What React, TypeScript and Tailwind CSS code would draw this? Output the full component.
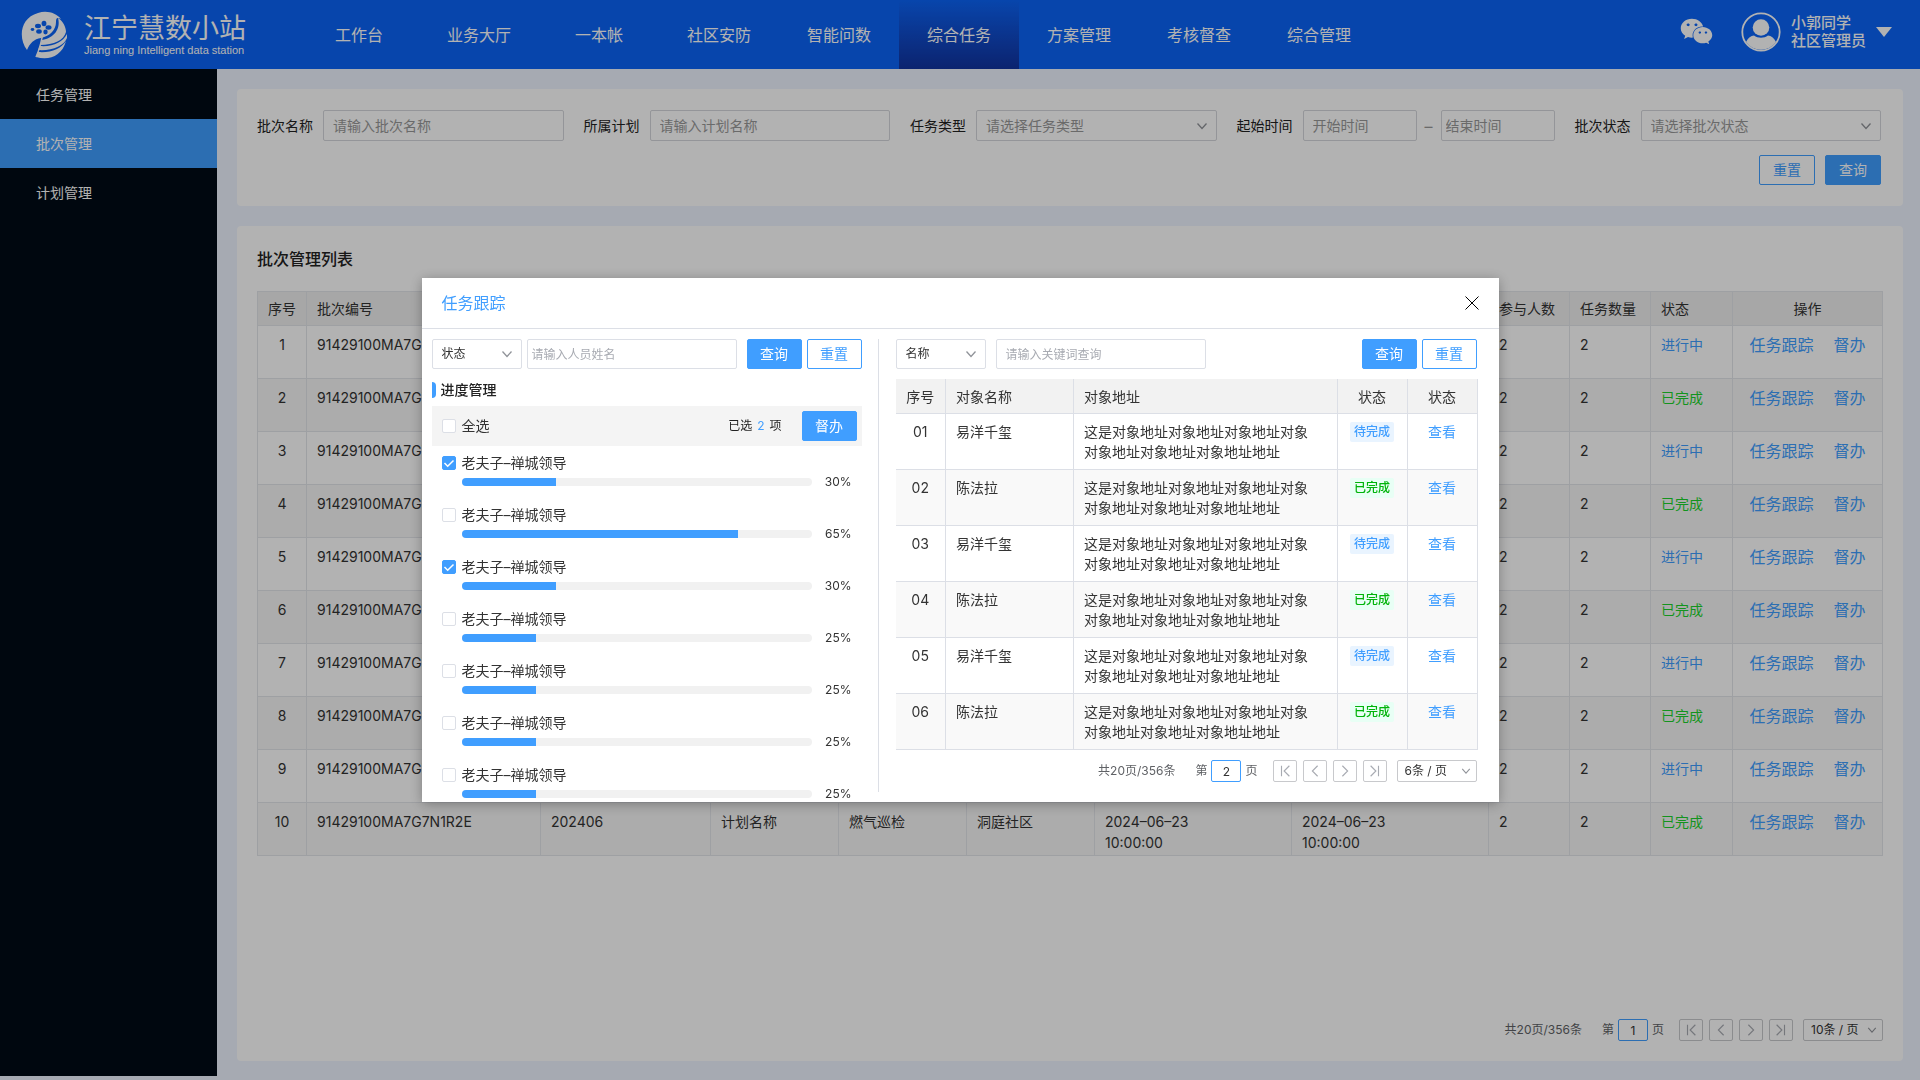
import React, { useState } from 'react';
import clsx from 'clsx';
import { FaWeixin } from 'react-icons/fa';

const navItems = ['工作台', '业务大厅', '一本帐', '社区安防', '智能问数', '综合任务', '方案管理', '考核督查', '综合管理'];
const sideItems = ['任务管理', '批次管理', '计划管理'];

const batches = Array.from({ length: 10 }, (_, i) => ({
  id: i + 1,
  code: '91429100MA7G7N1R2E',
  month: '202406',
  plan: '计划名称',
  type: '燃气巡检',
  community: '洞庭社区',
  start: ['2024–06–23', '10:00:00'],
  end: ['2024–06–23', '10:00:00'],
  people: 2,
  tasks: 2,
  done: i % 2 === 1,
}));

const batchColumns = [
  { label: '序号', className: 'w-[49px] text-center' },
  { label: '批次编号', className: 'w-[234px] px-[10px] text-left' },
  { label: '所属月份', className: 'w-[170px] px-[10px] text-left' },
  { label: '所属计划', className: 'w-[128px] px-[10px] text-left' },
  { label: '任务类型', className: 'w-[128px] px-[10px] text-left' },
  { label: '所属社区', className: 'w-[128px] px-[10px] text-left' },
  { label: '开始时间', className: 'w-[197px] px-[10px] text-left' },
  { label: '结束时间', className: 'w-[197px] px-[10px] text-left' },
  { label: '参与人数', className: 'w-[81px] px-[10px] text-left' },
  { label: '任务数量', className: 'w-[81px] px-[10px] text-left' },
  { label: '状态', className: 'w-[82px] px-[10px] text-left' },
  { label: '操作', className: 'w-[150px] text-center' },
];

// fill is the drawn length of the bar, percent is the printed value
const people = [
  { id: 1, name: '老夫子–禅城领导', percent: 30, fill: 27 },
  { id: 2, name: '老夫子–禅城领导', percent: 65, fill: 79 },
  { id: 3, name: '老夫子–禅城领导', percent: 30, fill: 27 },
  { id: 4, name: '老夫子–禅城领导', percent: 25, fill: 21.4 },
  { id: 5, name: '老夫子–禅城领导', percent: 25, fill: 21.4 },
  { id: 6, name: '老夫子–禅城领导', percent: 25, fill: 21.4 },
  { id: 7, name: '老夫子–禅城领导', percent: 25, fill: 21.4 },
];

const targets = ['01', '02', '03', '04', '05', '06'].map((no, i) => ({
  no,
  name: i % 2 === 0 ? '易洋千玺' : '陈法拉',
  address: ['这是对象地址对象地址对象地址对象', '对象地址对象地址对象地址地址'],
  done: i % 2 === 1,
}));

function Logo() {
  return (
    <svg viewBox="0 0 48 48" className="size-12 shrink-0" aria-hidden="true">
      <path d="M7 39C-2 27 0 7 18 2c9-3 18 0 23 6-4-2-5-1-5 3 0 8-6 14-15 16-7 1-11 5-14 12Z" fill="#fff" />
      <path d="M38 7c3 11-4 20-16 22l-2 5c14 0 24-5 26-13 0-5-3-11-8-14Z" fill="#fff" />
      <path d="M47 23c-4 8-14 13-27 12l-2 4c14 1 26-4 29-12Z" fill="#fff" />
      <path d="M46 30c-5 8-15 12-28 11l-2 5c13 4 26-1 30-16Z" fill="#fff" />
      <path d="M23 20c-1 9-3 17-7 26" fill="none" stroke="#fff" strokeWidth="1.500" />
      <g fill="#0b64f7">
        <ellipse cx="18" cy="15" rx="3" ry="2.200" />
        <ellipse cx="24" cy="12.500" rx="2.400" ry="2.800" />
        <ellipse cx="28.500" cy="16.500" rx="3" ry="2.200" />
        <ellipse cx="25.500" cy="21" rx="2.200" ry="2.400" />
        <ellipse cx="19" cy="20.500" rx="2.800" ry="2.200" />
        <ellipse cx="12.500" cy="18.500" rx="1.800" ry="1.400" />
      </g>
    </svg>
  );
}

function Avatar() {
  return (
    <svg viewBox="0 0 40 40" className="size-10" aria-hidden="true">
      <circle cx="20" cy="20" r="18.7" fill="none" stroke="#fff" strokeWidth="1.8" />
      <circle cx="20" cy="15.5" r="8.3" fill="#fff" />
      <path d="M5 30c2-4 5-6.300 8-6.500 4 3 10 3 14 0 3 .2 6 2.500 8 6.500a18.500 18.500 0 0 1-30 0Z" fill="#fff" />
    </svg>
  );
}

function Chevron({ className }: { className?: string }) {
  return (
    <svg
      viewBox="0 0 12 12"
      fill="none"
      stroke="currentColor"
      strokeWidth="1.3"
      className={clsx('pointer-events-none absolute top-1/2 -translate-y-1/2', className)}
      aria-hidden="true"
    >
      <path d="M1.500 3.500 6 8.500l4.500-5" />
    </svg>
  );
}

function SelectBox({ label, option, className, selectClass, chevronClass }: {
  label: string;
  option: string;
  className?: string;
  selectClass: string;
  chevronClass: string;
}) {
  return (
    <div className={clsx('relative', className)}>
      <select aria-label={label} className={clsx('w-full appearance-none rounded-xs border bg-white', selectClass)}>
        <option>{option}</option>
      </select>
      <Chevron className={chevronClass} />
    </div>
  );
}

function Field({ id, label, children }: { id?: string; label: string; children: React.ReactNode }) {
  return (
    <div className="flex min-w-0 flex-1 items-center gap-[10px]">
      <label htmlFor={id} className="shrink-0 text-sm text-[#222]">{label}</label>
      {children}
    </div>
  );
}

function Button({ children, outline, className }: { children: React.ReactNode; outline?: boolean; className?: string }) {
  return (
    <button
      type="button"
      className={clsx(
        'h-[30px] shrink-0 rounded-xs border border-[#409eff] text-sm',
        outline ? 'bg-white text-[#409eff]' : 'bg-[#409eff] text-white',
        className ?? 'w-[55px]',
      )}
    >
      {children}
    </button>
  );
}

const pagerPaths = [
  { label: '首页', d: 'M4 2v12M13 2 7 8l6 6' },
  { label: '上一页', d: 'M11 2 5 8l6 6' },
  { label: '下一页', d: 'M5 2l6 6-6 6' },
  { label: '末页', d: 'M12 2v12M3 2l6 6-6 6' },
];

function Pagination({ page, size, className }: { page: string; size: string; className?: string }) {
  return (
    <div className={clsx('flex items-center justify-end text-xs text-[#606266]', className)}>
      <span className="mr-5">共20页/356条</span>
      <label className="flex items-center gap-1">
        第
        <input
          type="text"
          defaultValue={page}
          className="h-[22px] w-[30px] rounded-xs border border-[#409eff] bg-white text-center text-[#333]"
        />
        页
      </label>
      <div className="mr-[10px] ml-[15px] flex gap-[6px]">
        {pagerPaths.map((p) => (
          <button
            key={p.label}
            type="button"
            aria-label={p.label}
            className="flex h-[22px] w-6 items-center justify-center rounded-xs border border-[#c8c9cc] text-[#a8abb2]"
          >
            <svg viewBox="0 0 16 16" className="size-[14px]" fill="none" stroke="currentColor" strokeWidth="1.300">
              <path d={p.d} />
            </svg>
          </button>
        ))}
      </div>
      <SelectBox
        label="每页条数"
        option={size}
        className="w-20"
        selectClass="h-[22px] border-[#c8c9cc] pl-[7px] text-[#333]"
        chevronClass="right-[6px] size-[10px] text-[#909399]"
      />
    </div>
  );
}

function Checkbox({ id, checked, onChange }: { id: string; checked: boolean; onChange: () => void }) {
  return (
    <span className="relative flex size-[14px] shrink-0">
      <input
        id={id}
        type="checkbox"
        checked={checked}
        onChange={onChange}
        className="size-[14px] appearance-none rounded-xs border border-[#dcdfe6] bg-white checked:border-[#409eff] checked:bg-[#409eff]"
      />
      {checked && (
        <svg viewBox="0 0 14 14" className="pointer-events-none absolute inset-0" fill="none" stroke="#fff" strokeWidth="1.500">
          <path d="m2.500 7 3.200 3.200L11.500 4.500" />
        </svg>
      )}
    </span>
  );
}

function TopBar() {
  return (
    <header className="flex h-[69px] shrink-0 items-center bg-[#0b64f7] text-white">
      <div className="flex w-[299px] shrink-0 items-center gap-4 pl-5">
        <Logo />
        <div>
          <p className="text-[27px] leading-[30px]">江宁慧数小站</p>
          <p className="font-['Liberation_Sans'] text-[11px] leading-3 whitespace-nowrap">Jiang ning Intelligent data station</p>
        </div>
      </div>
      <nav className="flex self-stretch">
        {navItems.map((item) => (
          <a
            key={item}
            href="#"
            className={clsx(
              'flex w-[120px] items-center justify-center text-base',
              item === '综合任务' && 'bg-linear-to-b from-[#0b64f7] to-[#1033a0]',
            )}
          >
            {item}
          </a>
        ))}
      </nav>
      <div className="ml-auto flex items-center pr-7 pb-[6px]">
        <FaWeixin className="mr-7 size-[33px]" />
        <Avatar />
        <div className="ml-[10px] text-[15px] leading-[18px] font-medium">
          <p>小郭同学</p>
          <p>社区管理员</p>
        </div>
        <svg viewBox="0 0 16 10" className="ml-[10px] h-[10px] w-4" aria-hidden="true">
          <path d="M0 0h16L8 10Z" fill="#fff" />
        </svg>
      </div>
    </header>
  );
}

function FilterCard() {
  const inputClass = 'h-[31px] min-w-0 rounded-xs border border-[#d4d6db] bg-white text-sm placeholder:text-[#999]';
  return (
    <section className="rounded-sm bg-white pt-[21px] pr-[22px] pb-[21px] pl-5">
      <div className="flex gap-5">
        <Field id="batch" label="批次名称">
          <input id="batch" placeholder="请输入批次名称" className={clsx(inputClass, 'flex-1 px-[9px]')} />
        </Field>
        <Field id="plan" label="所属计划">
          <input id="plan" placeholder="请输入计划名称" className={clsx(inputClass, 'flex-1 px-[9px]')} />
        </Field>
        <Field label="任务类型">
          <SelectBox
            label="任务类型"
            option="请选择任务类型"
            className="min-w-0 flex-1"
            selectClass="h-[31px] border-[#d4d6db] px-[9px] text-sm text-[#999]"
            chevronClass="right-[9px] size-3 text-[#909399]"
          />
        </Field>
        <div className="flex shrink-0 items-center gap-[10px]">
          <label htmlFor="from" className="text-sm text-[#222]">起始时间</label>
          <div className="flex items-center">
            <input id="from" placeholder="开始时间" className={clsx(inputClass, 'w-[114px] px-[9px]')} />
            <span className="w-6 text-center text-[#999]">–</span>
            <input aria-label="结束时间" placeholder="结束时间" className={clsx(inputClass, 'w-[114px] px-1')} />
          </div>
        </div>
        <Field label="批次状态">
          <SelectBox
            label="批次状态"
            option="请选择批次状态"
            className="min-w-0 flex-1"
            selectClass="h-[31px] border-[#d4d6db] px-[9px] text-sm text-[#999]"
            chevronClass="right-[9px] size-3 text-[#909399]"
          />
        </Field>
      </div>
      <div className="mt-[14px] flex justify-end gap-[10px]">
        <Button outline className="w-[56px]">重置</Button>
        <Button className="w-[56px]">查询</Button>
      </div>
    </section>
  );
}

function BatchTable() {
  const cell = 'border border-[#e3e5ea] px-[10px] pt-2 align-top';
  return (
    <table className="w-full table-fixed border-collapse text-sm leading-[21px] text-[#333]">
      <thead>
        <tr className="h-[34px] bg-[#f0f0f0]">
          {batchColumns.map((col) => (
            <th key={col.label} className={clsx('border border-[#e3e5ea] font-normal whitespace-nowrap', col.className)}>
              {col.label}
            </th>
          ))}
        </tr>
      </thead>
      <tbody>
        {batches.map((row) => (
          <tr key={row.id} className="h-[53px] even:bg-[#f7f7f7]">
            <td className="border border-[#e3e5ea] pt-2 text-center align-top">{row.id}</td>
            <td className={cell}>{row.code}</td>
            <td className={cell}>{row.month}</td>
            <td className={cell}>{row.plan}</td>
            <td className={cell}>{row.type}</td>
            <td className={cell}>{row.community}</td>
            <td className={cell}>{row.start[0]}<br />{row.start[1]}</td>
            <td className={cell}>{row.end[0]}<br />{row.end[1]}</td>
            <td className={cell}>{row.people}</td>
            <td className={cell}>{row.tasks}</td>
            <td className={clsx(cell, row.done ? 'text-[#1cd42c]' : 'text-[#409eff]')}>{row.done ? '已完成' : '进行中'}</td>
            <td className="border border-[#e3e5ea] pt-[9px] align-top text-base leading-[21px] text-[#409eff]">
              <div className="flex justify-center gap-5">
                <a href="#">任务跟踪</a>
                <a href="#">督办</a>
              </div>
            </td>
          </tr>
        ))}
      </tbody>
    </table>
  );
}

function ProgressPanel() {
  const [selected, setSelected] = useState<number[]>([1, 3]);

  const toggle = (id: number) => {
    setSelected((prev) => (prev.includes(id) ? prev.filter((x) => x !== id) : [...prev, id]));
  };

  const toggleAll = () => {
    setSelected(selected.length === people.length ? [] : people.map((p) => p.id));
  };

  return (
    <div className="w-[430px] shrink-0">
      <div className="flex">
        <SelectBox
          label="状态"
          option="状态"
          className="mr-[5px] w-[90px]"
          selectClass="h-[30px] border-[#dcdfe6] px-[9px] text-xs text-[#333]"
          chevronClass="right-[9px] size-3 text-[#909399]"
        />
        <input
          aria-label="人员姓名"
          placeholder="请输入人员姓名"
          className="h-[30px] min-w-0 flex-1 rounded-xs border border-[#dcdfe6] px-1 text-xs placeholder:text-[#a8abb2]"
        />
        <Button className="ml-[10px] w-[55px]">查询</Button>
        <Button outline className="ml-[5px] w-[55px]">重置</Button>
      </div>
      <h3 className="mt-[10px] flex h-[22px] items-center gap-[5px] text-sm font-medium text-[#222]">
        <span className="h-4 w-1 rounded-r-sm bg-[#409eff]" />
        进度管理
      </h3>
      <div className="mt-[5px] flex h-10 items-center bg-[#f4f4f4] pr-[5px] pl-[10px]">
        <Checkbox id="all" checked={selected.length === people.length} onChange={toggleAll} />
        <label htmlFor="all" className="ml-[6px] text-sm">全选</label>
        <p className="mr-5 ml-auto text-xs text-[#222]">
          已选<span className="mx-[5px] text-[#409eff]">{selected.length}</span>项
        </p>
        <Button>督办</Button>
      </div>
      <ul className="mt-[6px] flex flex-col gap-3 px-[10px]">
        {people.map((p) => (
          <li key={p.id} className="h-10">
            <div className="flex h-[22px] items-center gap-[6px]">
              <Checkbox id={`person-${p.id}`} checked={selected.includes(p.id)} onChange={() => toggle(p.id)} />
              <label htmlFor={`person-${p.id}`} className="text-sm">{p.name}</label>
            </div>
            <div className="flex h-4 items-center justify-between pl-5">
              <div className="h-2 w-[350px] overflow-hidden rounded-full bg-[#f1f1f1]">
                <div className="h-full bg-[#409eff]" style={{ width: `${p.fill}%` }} />
              </div>
              <span className="text-xs leading-4">{p.percent}%</span>
            </div>
          </li>
        ))}
      </ul>
    </div>
  );
}

function TargetPanel() {
  const head = 'border border-[#dcdfe6] border-t-[#f2f2f2] font-normal';
  const cell = 'border border-[#dcdfe6] pt-2 align-top';
  return (
    <div className="min-w-0 flex-1">
      <div className="flex pr-px">
        <SelectBox
          label="名称"
          option="名称"
          className="mr-[10px] w-[90px]"
          selectClass="h-[30px] border-[#dcdfe6] px-[9px] text-xs text-[#333]"
          chevronClass="right-[9px] size-3 text-[#909399]"
        />
        <input
          aria-label="关键词"
          placeholder="请输入关键词查询"
          className="h-[30px] w-[210px] rounded-xs border border-[#dcdfe6] px-[9px] text-xs placeholder:text-[#a8abb2]"
        />
        <Button className="ml-auto w-[55px]">查询</Button>
        <Button outline className="ml-[5px] w-[55px]">重置</Button>
      </div>
      <table className="mt-[10px] w-full table-fixed border-collapse text-sm leading-5">
        <thead>
          <tr className="h-[34px] bg-[#f2f2f2]">
            <th className={clsx(head, 'w-[50px] border-l-0')}>序号</th>
            <th className={clsx(head, 'w-[128px] px-[10px] text-left')}>对象名称</th>
            <th className={clsx(head, 'px-[10px] text-left')}>对象地址</th>
            <th className={clsx(head, 'w-[70px]')}>状态</th>
            <th className={clsx(head, 'w-[70px]')}>状态</th>
          </tr>
        </thead>
        <tbody>
          {targets.map((t) => (
            <tr key={t.no} className="h-14 even:bg-[#f9f9f9]">
              <td className={clsx(cell, 'border-l-0 text-center')}>{t.no}</td>
              <td className={clsx(cell, 'px-[10px]')}>{t.name}</td>
              <td className={clsx(cell, 'px-[10px] whitespace-nowrap')}>{t.address[0]}<br />{t.address[1]}</td>
              <td className={clsx(cell, 'text-center')}>
                <span
                  className={clsx(
                    'mx-auto block h-5 w-11 rounded-xs text-xs leading-5 font-medium',
                    t.done ? 'bg-[#e8fff5] text-[#00b40a]' : 'bg-[#e9f4ff] text-[#409eff]',
                  )}
                >
                  {t.done ? '已完成' : '待完成'}
                </span>
              </td>
              <td className={clsx(cell, 'text-center')}>
                <a href="#" className="text-[#409eff]">查看</a>
              </td>
            </tr>
          ))}
        </tbody>
      </table>
      <Pagination page="2" size="6条 / 页" className="mt-[10px] pr-px" />
    </div>
  );
}

function TrackingDialog() {
  return (
    <div className="fixed inset-0 z-10 flex items-center justify-center bg-black/30">
      <div
        role="dialog"
        aria-label="任务跟踪"
        className="flex h-[524px] w-[1077px] max-w-full flex-col overflow-hidden bg-white text-[#333] shadow-[0_2px_12px_rgba(0,0,0,0.3)]"
      >
        <div className="flex h-[51px] shrink-0 items-center justify-between border-b border-[#dcdfe6] px-5">
          <h2 className="text-base text-[#409eff]">任务跟踪</h2>
          <button type="button" aria-label="关闭" className="text-black">
            <svg viewBox="0 0 14 14" className="size-[14px]" fill="none" stroke="currentColor" strokeWidth="1">
              <path d="m.5.5 13 13M13.500.500l-13 13" />
            </svg>
          </button>
        </div>
        <div className="flex min-h-0 flex-1 pt-[10px] pr-[21px] pl-[10px]">
          <ProgressPanel />
          <div className="mr-[17px] mb-[10px] ml-4 w-px bg-[#dcdfe6]" />
          <TargetPanel />
        </div>
      </div>
    </div>
  );
}

export default function App() {
  return (
    <div className="flex min-h-screen flex-col bg-[#eef4ff] font-[Inter,'Noto_Sans_CJK_SC',sans-serif]">
      <TopBar />
      <div className="flex flex-1">
        <aside className="mb-1 w-[217px] shrink-0 bg-[#000b16] pt-px">
          {sideItems.map((item) => (
            <a
              key={item}
              href="#"
              className={clsx(
                'flex h-[49px] items-center pl-9 text-sm text-white',
                item === '批次管理' && 'bg-[#409eff]',
              )}
            >
              {item}
            </a>
          ))}
        </aside>
        <main className="flex min-w-0 flex-1 flex-col gap-5 pt-5 pr-[17px] pb-[19px] pl-5">
          <FilterCard />
          <section className="flex flex-1 flex-col rounded-sm bg-white p-5">
            <h2 className="mb-5 pt-px text-base leading-6 font-medium text-[#222]">批次管理列表</h2>
            <BatchTable />
            <Pagination page="1" size="10条 / 页" className="mt-auto" />
          </section>
        </main>
      </div>
      <TrackingDialog />
    </div>
  );
}
